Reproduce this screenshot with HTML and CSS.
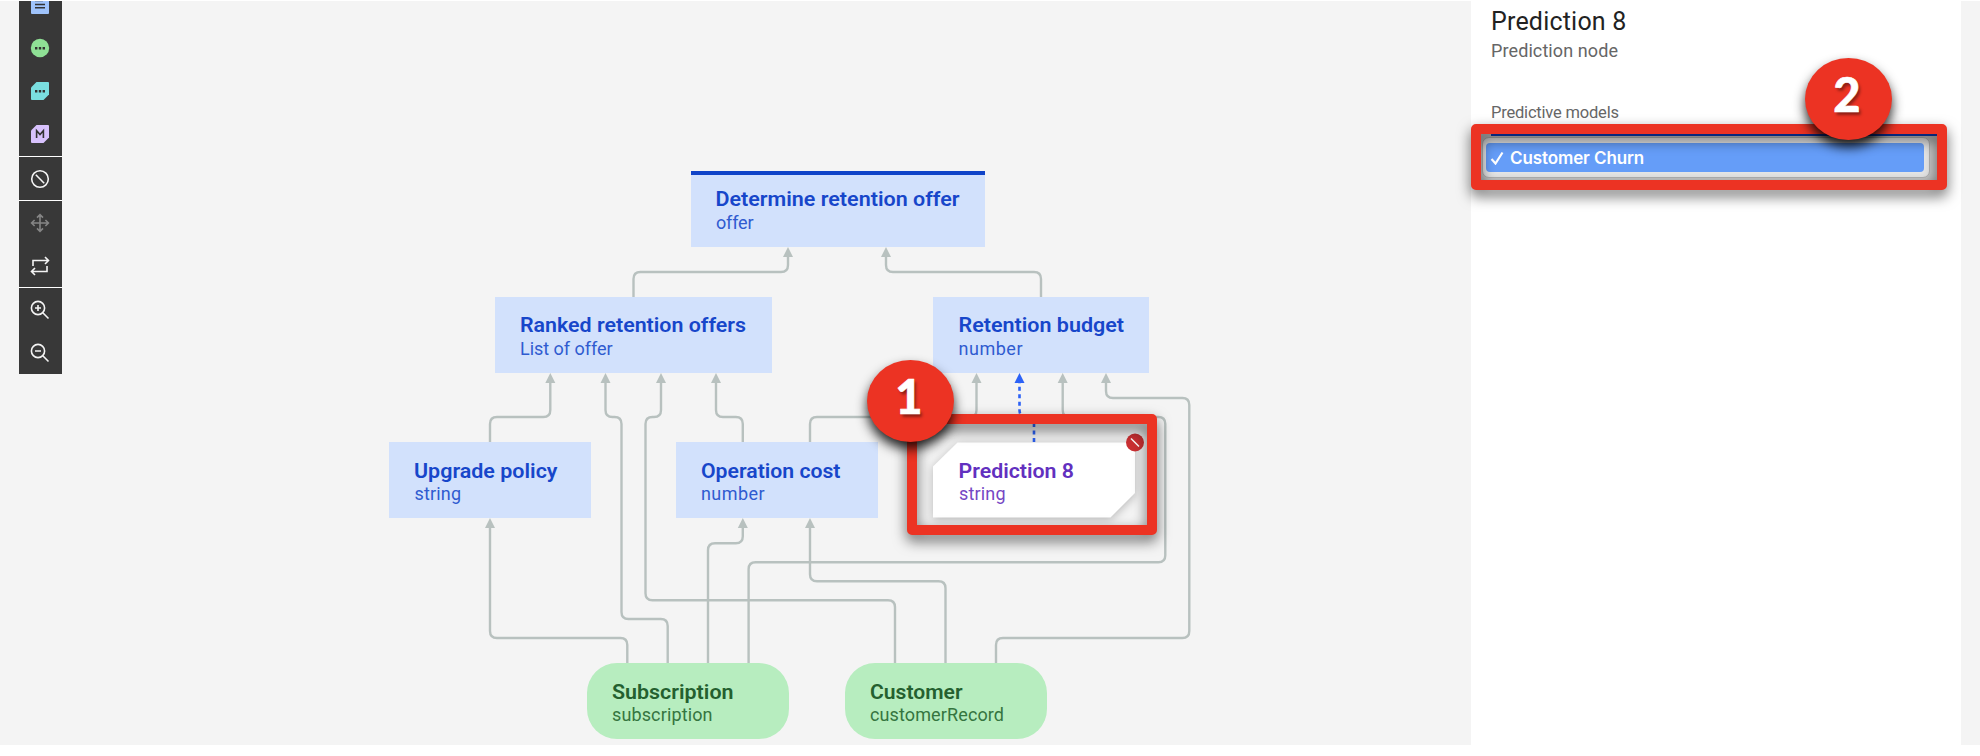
FILE: index.html
```html
<!DOCTYPE html>
<html lang="en">
<head>
<meta charset="utf-8">
<title>Decision diagram</title>
<link rel="stylesheet" href="styles.css">
</head>
<body>
<div class="app">
  <nav class="toolbar">
    <div class="group first">
      <svg class="icon" viewBox="0 0 20 20"><rect x="1" y="1" width="18" height="18" rx="1" fill="#9fc3fb"/><path d="M5 5.500h8M5 9.500h10M5 12.700h10" stroke="#333" stroke-width="1.4"/></svg>
      <svg class="icon" viewBox="0 0 20 20"><circle cx="10" cy="10" r="9.2" fill="#8fe095"/><path d="M5 9h2.4v2.4H5zM8.8 9h2.4v2.4H8.8zM12.6 9H15v2.4h-2.4z" fill="#333"/></svg>
      <svg class="icon" viewBox="0 0 20 20"><path d="M6.5 1H18q1 0 1 1v11.5L13.500 19H2q-1 0-1-1V6.500z" fill="#7adfe0"/><path d="M5 9h2.400v2.400H5zM8.800 9h2.400v2.400H8.800zM12.600 9H15v2.400h-2.400z" fill="#333"/></svg>
      <svg class="icon" viewBox="0 0 20 20"><path d="M6.500 1H18q1 0 1 1v11.500L13.500 19H2q-1 0-1-1V6.500z" fill="#d8c2fd"/><path d="M6.600 14V6.700L10 10.500l3.400-3.800V14" fill="none" stroke="#333" stroke-width="1.600"/></svg>
    </div>
    <div class="group">
      <svg class="icon line" viewBox="0 0 20 20"><circle cx="10" cy="10" r="8.300"/><path d="M5.800 5.800l8.400 8.400"/></svg>
    </div>
    <div class="group">
      <svg class="icon line dim" viewBox="0 0 20 20"><path d="M10 2v16M2 10h16M7 4.600l3-3 3 3M7 15.400l3 3 3-3M4.600 7l-3 3 3 3M15.400 7l3 3-3 3"/></svg>
      <svg class="icon line" viewBox="0 0 20 20"><path d="M3 10V4.500h15.500M15 1l3.500 3.500L15 8M17 10v5.500H1.500M5 12l-3.500 3.500L5 19"/></svg>
    </div>
    <div class="group">
      <svg class="icon line" viewBox="0 0 20 20"><circle cx="8" cy="8" r="6.600"/><path d="M12.800 12.800L18.500 18.500M8 5v6M5 8h6"/></svg>
      <svg class="icon line" viewBox="0 0 20 20"><circle cx="8" cy="8" r="6.600"/><path d="M12.800 12.800L18.500 18.500M5 8h6"/></svg>
    </div>
  </nav>

  <svg class="diagram" viewBox="62 1 1409 744">
    <g id="wires"></g>
    <g class="node decision">
      <rect x="691" y="171" width="294" height="76"/>
      <rect class="bar" x="691" y="171" width="294" height="4"/>
      <text class="name" x="715.500" y="206" textLength="244" lengthAdjust="spacingAndGlyphs">Determine retention offer</text>
      <text class="type" x="716" y="229" textLength="37.500">offer</text>
    </g>
    <g class="node decision">
      <rect x="495" y="297" width="277" height="76"/>
      <text class="name" x="520" y="332" textLength="226" lengthAdjust="spacingAndGlyphs">Ranked retention offers</text>
      <text class="type" x="520" y="355" textLength="92.500">List of offer</text>
    </g>
    <g class="node decision">
      <rect x="933" y="297" width="216" height="76"/>
      <text class="name" x="958.500" y="332" textLength="165.500" lengthAdjust="spacingAndGlyphs">Retention budget</text>
      <text class="type" x="958.500" y="355" textLength="64">number</text>
    </g>
    <g class="node decision">
      <rect x="389" y="442" width="202" height="76"/>
      <text class="name" x="414" y="477.500" textLength="143.500" lengthAdjust="spacingAndGlyphs">Upgrade policy</text>
      <text class="type" x="414.500" y="500" textLength="46.500">string</text>
    </g>
    <g class="node decision">
      <rect x="676" y="442" width="202" height="76"/>
      <text class="name" x="701" y="477.500" textLength="139.500" lengthAdjust="spacingAndGlyphs">Operation cost</text>
      <text class="type" x="701" y="500" textLength="63.500">number</text>
    </g>
    <g class="node data">
      <rect x="587" y="663" width="202" height="76" rx="30"/>
      <text class="name" x="612" y="698.500" textLength="121.500" lengthAdjust="spacingAndGlyphs">Subscription</text>
      <text class="type" x="612" y="721" textLength="100.500">subscription</text>
    </g>
    <g class="node data">
      <rect x="845" y="663" width="202" height="76" rx="30"/>
      <text class="name" x="870" y="698.500" textLength="92.500" lengthAdjust="spacingAndGlyphs">Customer</text>
      <text class="type" x="870" y="721" textLength="134">customerRecord</text>
    </g>
    <g class="node prediction">
      <path class="shape" d="M957.500 442.500H1135V493L1110.500 517.500H933V466.500z"/>
      <text class="name" x="958.500" y="477.500" textLength="115.500" lengthAdjust="spacingAndGlyphs">Prediction 8</text>
      <text class="type" x="959" y="500" textLength="46.500">string</text>
      <circle cx="1135" cy="442.500" r="9" fill="#ca2f32"/>
      <path d="M1131 438.500l8 8" stroke="#fff" stroke-width="1.500"/>
    </g>
  </svg>

  <aside class="panel">
    <h1>Prediction 8</h1>
    <p class="kind">Prediction node</p>
    <label class="label">Predictive models</label>
    <div class="select">
      <div class="menu">
        <div class="option">
          <svg class="check" viewBox="0 0 14 14"><path d="M1.500 8l4 4.500L12.500 1.500"/></svg>
          <span>Customer Churn</span>
        </div>
      </div>
    </div>
  </aside>
</div>
<div class="frame one"></div>
<div class="frame two"></div>
<div class="badge b1">1</div>
<div class="badge b2">2</div>
<script src="app.js"></script>
</body>
</html>
```
FILE: styles.css
```css
* { box-sizing: border-box; }
body {
  margin: 0;
  height: 756px;
  overflow: hidden;
  position: relative;
  padding-top: 1px;
  background: #fff;
  font-family: Roboto, "Liberation Sans", sans-serif;
}
.app {
  display: flex;
  height: 744px;
  padding-left: 19px;
  padding-right: 19px;
  background: #f4f4f4;
}
.toolbar {
  display: flex;
  flex-direction: column;
  gap: 1px;
  width: 43px;
  height: 373px;
  overflow: hidden;
  background: #fff;
}
.group {
  flex: none;
  display: flex;
  flex-direction: column;
  align-items: center;
  gap: 23px;
  padding: 12px 1px 11px 0;
  background: #383838;
}
.group.first { margin-top: -18px; padding-bottom: 12px; }
.icon { width: 20px; height: 20px; display: block; }
.line { fill: none; stroke: #f4f4f4; stroke-width: 1.600; }
.dim { stroke: #858585; }

.diagram { flex: none; width: 1409px; height: 744px; display: block; }
.wire { fill: none; stroke: #b8c1bf; stroke-width: 2.400; }
.tip { fill: #b8c1bf; }
.wire.active { stroke: #2c62f6; stroke-width: 2.600; stroke-dasharray: 4 3.500; }
.tip.active { fill: #2c62f6; }
.name { font-size: 21px; font-weight: 600; }
.type { font-size: 18px; }
.decision { fill: #d2e1fc; }
.decision .bar { fill: #0f43c8; }
.decision .name { fill: #1746ca; }
.decision .type { fill: #2f5bd0; }
.data { fill: #b7edbf; }
.data .name { fill: #24602f; }
.data .type { fill: #35753f; }
.prediction .shape { fill: #fff; filter: drop-shadow(0 2px 5px rgba(0, 0, 0, .25)); }
.prediction .name { fill: #6230bf; }
.prediction .type { fill: #7547c4; }

.panel { flex: none; width: 490px; background: #fff; }
h1 {
  margin: 0 0 0 20px;
  font-size: 25px;
  line-height: 42px;
  font-weight: 400;
  letter-spacing: .2px;
  color: #222;
  height: 42px;
}
.kind, .label { display: block; margin: -2px 0 0 20px; color: #666; font-size: 18px; line-height: 20px; letter-spacing: .1px; }
.label { margin-top: 42px; font-size: 16.500px; letter-spacing: -.2px; }
.select {
  width: 456px;
  height: 46px;
  margin: 11px 0 0 10px;
  padding: 3px 7px 2px 1px;
  background: #c8c8c8 linear-gradient(90deg, transparent 10px, #0b3cb8 10px) top / 100% 2px no-repeat;
}
.menu { height: 41px; border-radius: 7px; padding: 5px 5px 6px 3px; background: #e6e6e6; border: 1px solid #b4b4b4; }
.option {
  display: flex;
  align-items: center;
  gap: 6px;
  height: 29px;
  padding-left: 4px;
  border-radius: 4px;
  background: #659df8;
  color: #fff;
  font: 600 17px Inter, "Liberation Sans", sans-serif;
  letter-spacing: -.1px;
}
.check { width: 14px; height: 14px; fill: none; stroke: #fff; stroke-width: 2.200; }

.frame { position: absolute; border: 10px solid #ec3323; border-radius: 5px; filter: drop-shadow(0 6px 7px rgba(0, 0, 0, .6)); }
.one { left: 907px; top: 414px; width: 250px; height: 121px; }
.two { left: 1471px; top: 124px; width: 476px; height: 66px; }
.badge {
  position: absolute;
  width: 87px;
  height: 82px;
  border-radius: 50%;
  padding-right: 3px;
  background: #ec3323;
  color: #fff;
  text-align: center;
  font: 900 47px/73px Lato, sans-serif;
  -webkit-text-stroke: .6px #fff;
  text-shadow: 2px 3px 3px rgba(0, 0, 0, .4);
  box-shadow: 0 7px 12px rgba(0, 0, 0, .85);
}
.b1 { left: 867px; top: 360px; }
.b2 { left: 1805px; top: 58px; }
```
FILE: app.js
```js
// Each wire runs from its source node to the arrow tip, with rounded corners.
const wires = [
  [[633.5, 297], [633.5, 272], [788, 272], [788, 247]],
  [[1041, 297], [1041, 272], [886, 272], [886, 247]],
  [[490, 442], [490, 417], [550.3, 417], [550.3, 373]],
  [[667.7, 663], [667.7, 619], [621.5, 619], [621.5, 417], [605.5, 417], [605.5, 373]],
  [[895, 663], [895, 600.3], [645.5, 600.3], [645.5, 417], [661, 417], [661, 373]],
  [[742.8, 442], [742.8, 417], [716, 417], [716, 373]],
  [[810, 442], [810, 417], [976.5, 417], [976.5, 373]],
  [[748.6, 663], [748.6, 562.3], [1165.3, 562.3], [1165.3, 417], [1062.7, 417], [1062.7, 373]],
  [[996, 663], [996, 638], [1189.3, 638], [1189.3, 398], [1106, 398], [1106, 373]],
  [[627.3, 663], [627.3, 638], [490, 638], [490, 518]],
  [[708, 663], [708, 543.3], [742.8, 543.3], [742.8, 518]],
  [[945.5, 663], [945.5, 581.3], [810, 581.3], [810, 518]],
  [[1034, 442], [1034, 417], [1019.5, 417], [1019.5, 373], "active"]
];
const svgNs = "http://www.w3.org/2000/svg";
const layer = document.getElementById("wires");
function add(d, cls) {
  const el = document.createElementNS(svgNs, "path");
  el.setAttribute("d", d);
  el.setAttribute("class", cls);
  layer.appendChild(el);
}
function toward(p, q, r) {
  const len = Math.hypot(q[0] - p[0], q[1] - p[1]);
  const k = Math.min(r, len / 2) / len;
  return [p[0] + (q[0] - p[0]) * k, p[1] + (q[1] - p[1]) * k];
}
for (const wire of wires) {
  const active = wire[wire.length - 1] === "active" ? " active" : "";
  const pts = wire.filter(Array.isArray);
  const [tx, ty] = pts[pts.length - 1];
  let d = "M" + pts[0];
  for (let i = 1; i < pts.length - 1; i++) {
    d += "L" + toward(pts[i], pts[i - 1], 7) + "Q" + pts[i] + " " + toward(pts[i], pts[i + 1], 7);
  }
  d += "L" + [tx, ty + 9];
  add(d, "wire" + active);
  add(`M${tx} ${ty}l5 10h-10z`, "tip" + active);
}
```
